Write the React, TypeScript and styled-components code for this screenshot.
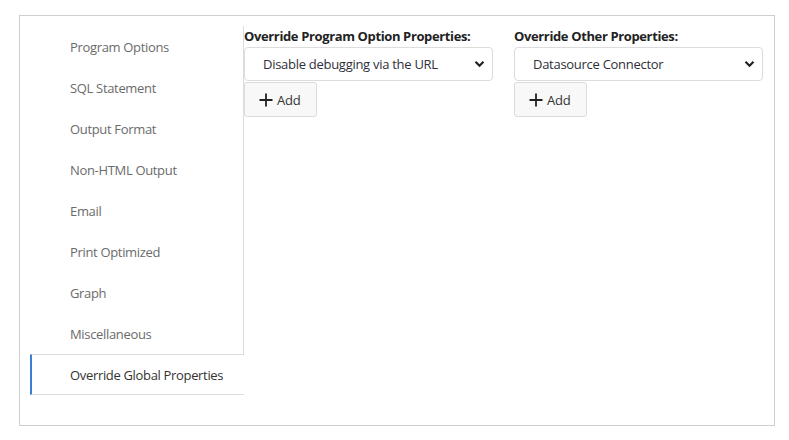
import React from "react";
import styled, { createGlobalStyle } from "styled-components";

const Global = createGlobalStyle`
  html, body { margin: 0; padding: 0; background: #fff; }
  body { font-family: "Open Sans", "Liberation Sans", sans-serif; }
`;

const Card = styled.div`
  box-sizing: border-box;
  margin: 15px 0 0 19px;
  width: 756px;
  height: 411px;
  border: 1px solid #cfcfcf;
  padding: 10px 10px;
  display: flex;
  align-items: flex-start;
`;

const Nav = styled.nav`
  width: 214px;
  flex: none;
  display: flex;
  flex-direction: column;
`;

const NavItem = styled.div<{ $active?: boolean }>`
  box-sizing: border-box;
  height: 41px;
  display: flex;
  align-items: center;
  padding-left: ${(p) => (p.$active ? "38px" : "40px")};
  font-size: 13px;
  letter-spacing: -0.33px;
  color: ${(p) => (p.$active ? "#333" : "#6b6b6b")};
  border-right: ${(p) => (p.$active ? "none" : "1px solid #dcdcdc")};
  border-left: ${(p) => (p.$active ? "2px solid #3b80d0" : "none")};
  border-top: ${(p) => (p.$active ? "1px solid #dcdcdc" : "none")};
  border-bottom: ${(p) => (p.$active ? "1px solid #dcdcdc" : "none")};
`;

const Content = styled.div`
  display: flex;
  gap: 21px;
`;

const Column = styled.div`
  width: 249px;
  display: flex;
  flex-direction: column;
  align-items: flex-start;
`;

const Label = styled.div`
  font-size: 13px;
  line-height: 21px;
  font-weight: 700;
  letter-spacing: -0.37px;
  color: #222;
  white-space: nowrap;
`;

const SelectWrap = styled.div`
  position: relative;
  width: 249px;
`;

const Select = styled.select`
  box-sizing: border-box;
  width: 100%;
  height: 34px;
  appearance: none;
  -webkit-appearance: none;
  border: 1px solid #dcdcdc;
  border-radius: 4px;
  background: #fff;
  padding: 0 30px 0 18px;
  font-family: "Open Sans", "Liberation Sans", sans-serif;
  font-size: 13px;
  letter-spacing: -0.28px;
  color: #2f2f3a;
  outline: none;
`;

const Chevron = styled.svg`
  position: absolute;
  right: 8px;
  top: 13px;
  width: 11px;
  height: 8px;
  pointer-events: none;
`;

const AddButton = styled.button`
  box-sizing: border-box;
  margin-top: 1px;
  width: 73px;
  height: 35px;
  display: flex;
  align-items: center;
  gap: 4px;
  padding: 0 0 0 14px;
  background: #f8f8f8;
  border: 1px solid #dcdcdc;
  border-radius: 3px;
  font-family: "Open Sans", "Liberation Sans", sans-serif;
  font-size: 13px;
  letter-spacing: -0.2px;
  color: #333;
`;

const navItems = [
  "Program Options",
  "SQL Statement",
  "Output Format",
  "Non-HTML Output",
  "Email",
  "Print Optimized",
  "Graph",
  "Miscellaneous",
];

const Field = ({ label, value }: { label: string; value: string }) => (
  <Column>
    <Label>{label}</Label>
    <SelectWrap>
      <Select defaultValue={value}>
        <option>{value}</option>
      </Select>
      <Chevron viewBox="0 0 11 8">
        <path d="M1.5 1.8 L5.5 5.8 L9.5 1.8" fill="none" stroke="#222" strokeWidth="2.2" />
      </Chevron>
    </SelectWrap>
    <AddButton>
      <svg width="14" height="14" viewBox="0 0 14 14">
        <path d="M7 0.5 V13.5 M0.5 7 H13.5" stroke="#222" strokeWidth="1.8" />
      </svg>
      Add
    </AddButton>
  </Column>
);

export default function App() {
  return (
    <>
      <Global />
      <Card>
        <Nav>
          {navItems.map((n) => (
            <NavItem key={n}>{n}</NavItem>
          ))}
          <NavItem $active>Override Global Properties</NavItem>
        </Nav>
        <Content>
          <Field label="Override Program Option Properties:" value="Disable debugging via the URL" />
          <Field label="Override Other Properties:" value="Datasource Connector" />
        </Content>
      </Card>
    </>
  );
}
